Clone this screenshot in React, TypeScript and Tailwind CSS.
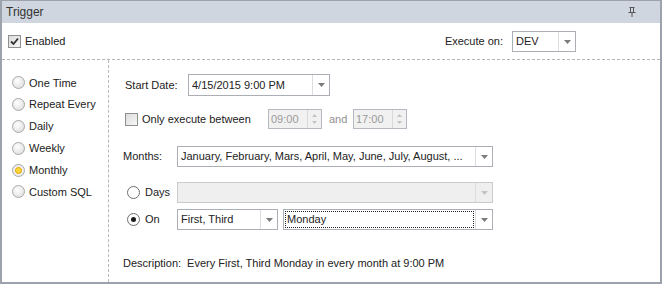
import React from "react";

const font = { fontFamily: '"Liberation Sans", Arial, sans-serif' };

function Arrow({ disabled }: { disabled?: boolean }) {
  return (
    <svg width="7" height="4" viewBox="0 0 7 4">
      <path d="M0 0 L7 0 L3.5 4 Z" fill={disabled ? "#c4c4c4" : "#7b7b7b"} />
    </svg>
  );
}

function Combo({
  text,
  className,
  disabled,
  focused,
}: {
  text?: string;
  className: string;
  disabled?: boolean;
  focused?: boolean;
}) {
  return (
    <div
      className={`flex border ${
        disabled ? "border-[#c9cbce] bg-[#efefef]" : "border-[#abaeb4] bg-white"
      } ${className}`}
    >
      <div className="flex flex-1 items-center min-w-0 p-[1px]">
        <div
          className={`flex h-full flex-1 items-center pl-[2px] whitespace-nowrap overflow-hidden ${
            focused ? "outline outline-1 outline-dotted outline-[#222] -outline-offset-1" : ""
          }`}
        >
          {text}
        </div>
      </div>
      <div
        className={`flex w-[17px] items-center justify-center border-l ${
          disabled ? "border-[#dcdcdc]" : "border-[#dadcdf]"
        }`}
      >
        <Arrow disabled={disabled} />
      </div>
    </div>
  );
}

function Spinner({ value, className }: { value: string; className: string }) {
  return (
    <div className={`flex h-[20px] border border-[#b6bac0] bg-[#f1f1f1] text-[#9a9a9a] ${className}`}>
      <div className="flex flex-1 items-center pl-[2px]">{value}</div>
      <div className="flex w-[14px] flex-col items-center justify-center gap-[4px] border-l border-[#d8d8d8]">
        <svg width="5" height="3" viewBox="0 0 5 3">
          <path d="M0 3 L5 3 L2.5 0 Z" fill="#c2c2c2" />
        </svg>
        <svg width="5" height="3" viewBox="0 0 5 3">
          <path d="M0 0 L5 0 L2.5 3 Z" fill="#c2c2c2" />
        </svg>
      </div>
    </div>
  );
}

function SkinRadio({ label, checked }: { label: string; checked?: boolean }) {
  return (
    <div className="flex h-[21.8px] items-center">
      <div
        className={`ml-[10px] flex h-[13px] w-[13px] items-center justify-center rounded-full border ${
          checked
            ? "border-[#a8a8a8] bg-[radial-gradient(circle,#ffffff_0%,#e4e4e4_100%)]"
            : "border-[#a9a9a9] bg-[radial-gradient(circle_at_40%_35%,#ffffff_0%,#dcdcdc_90%)]"
        }`}
      >
        {checked && (
          <div className="h-[7px] w-[7px] rounded-full border border-[#e4a300] bg-[#ffd83a]" />
        )}
      </div>
      <span className="ml-[4px]">{label}</span>
    </div>
  );
}

function PlainRadio({ checked }: { checked?: boolean }) {
  return (
    <div className="flex h-[13px] w-[13px] items-center justify-center rounded-full border border-[#6f6f6f] bg-white">
      {checked && <div className="h-[5px] w-[5px] rounded-full bg-[#1a1a1a]" />}
    </div>
  );
}

function CheckBox({ checked }: { checked?: boolean }) {
  return (
    <div className="flex h-[13px] w-[13px] items-center justify-center border border-[#8e8f8f] bg-[linear-gradient(135deg,#dcdcdc,#f7f7f7)]">
      {checked && (
        <svg width="9" height="9" viewBox="0 0 9 9">
          <path d="M1 4.5 L3.5 7 L8 1.5" stroke="#333" strokeWidth="1.8" fill="none" />
        </svg>
      )}
    </div>
  );
}

export default function App() {
  return (
    <div
      className="flex h-[284px] w-[662px] flex-col border-x-2 border-b-2 border-t border-[#9ba2ab] bg-white text-[11px] text-[#222]"
      style={font}
    >
      {/* header */}
      <div className="flex h-[22px] items-center justify-between bg-[#cfd6e0] pl-[4px] pr-[24px] text-[12px] text-[#333]">
        <span>Trigger</span>
        <svg width="8" height="10" viewBox="0 0 8 10">
          <path d="M1.5 0.5 H6.5 M2.5 0.5 V5.5 M5.5 0.5 V5.5 M0.5 5.5 H7.5 M4 5.5 V10" stroke="#555" strokeWidth="1" fill="none" />
        </svg>
      </div>

      {/* top row */}
      <div className="flex h-[37px] items-center border-b border-dashed border-[#b7b7b7] pl-[6px] pr-[84px] pt-[1px]">
        <CheckBox checked />
        <span className="ml-[4px]">Enabled</span>
        <div className="flex-1" />
        <span>Execute on:</span>
        <Combo text="DEV" className="ml-[9px] h-[21px] w-[64px]" />
      </div>

      {/* body */}
      <div className="flex flex-1">
        <div className="flex w-[107px] flex-col border-r border-dashed border-[#b7b7b7] pt-[12px]">
          <SkinRadio label="One Time" />
          <SkinRadio label="Repeat Every" />
          <SkinRadio label="Daily" />
          <SkinRadio label="Weekly" />
          <SkinRadio label="Monthly" checked />
          <SkinRadio label="Custom SQL" />
        </div>

        <div className="flex flex-1 flex-col pl-[14px] pt-[14px]">
          <div className="flex h-[22px] items-center">
            <span className="ml-[2px] w-[63px]">Start Date:</span>
            <Combo text="4/15/2015 9:00 PM" className="h-[22px] w-[142px]" />
          </div>

          <div className="mt-[13px] flex h-[20px] items-center">
            <div className="ml-[2px]">
              <CheckBox />
            </div>
            <span className="ml-[4px] w-[126px]">Only execute between</span>
            <Spinner value="09:00" className="w-[54px]" />
            <span className="ml-[7px] w-[24px] text-[#8f8f8f]">and</span>
            <Spinner value="17:00" className="w-[54px]" />
          </div>

          <div className="mt-[17px] flex h-[21px] items-center">
            <span className="w-[54px]">Months:</span>
            <Combo
              text="January, February, Mars, April, May, June, July, August, ..."
              className="h-[21px] w-[316px]"
            />
          </div>

          <div className="mt-[15px] flex h-[21px] items-center">
            <div className="ml-[4px]">
              <PlainRadio />
            </div>
            <span className="ml-[5px] w-[32px]">Days</span>
            <Combo disabled className="h-[21px] w-[316px]" />
          </div>

          <div className="mt-[6px] flex h-[21px] items-center">
            <div className="ml-[4px]">
              <PlainRadio checked />
            </div>
            <span className="ml-[5px] w-[32px]">On</span>
            <Combo text="First, Third" className="h-[21px] w-[101px]" />
            <Combo text="Monday" focused className="ml-[5px] h-[21px] w-[210px]" />
          </div>

          <div className="mt-[25px] flex h-[16px] items-center">
            <span>Description:</span>
            <span className="ml-[6px]">Every First, Third Monday in every month at 9:00 PM</span>
          </div>
        </div>
      </div>
    </div>
  );
}
